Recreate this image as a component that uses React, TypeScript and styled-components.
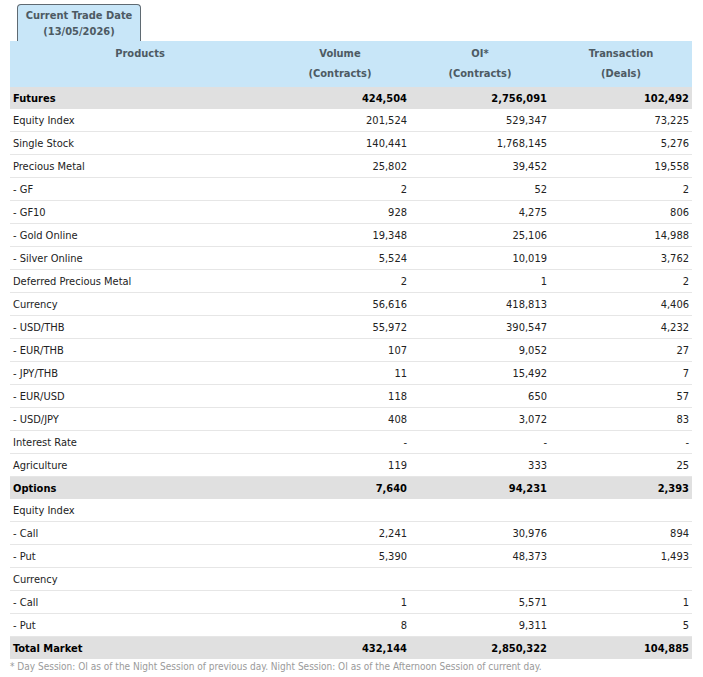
import React from "react";
import styled, { createGlobalStyle } from "styled-components";

const GlobalStyle = createGlobalStyle`
  body {
    margin: 0;
    background: #ffffff;
    font-family: "DejaVu Sans Condensed", "DejaVu Sans", sans-serif;
    font-size: 11px;
  }
`;

const StyledPage = styled.div`
  width: 682px;
  padding: 4px 11px 0 10px;
`;

const StyledTabBar = styled.div`
  display: flex;
  padding-left: 7px;
`;

const StyledTab = styled.div`
  width: 124px;
  height: 37px;
  box-sizing: border-box;
  border: 1px solid #5f6a72;
  border-bottom: none;
  border-radius: 4px 4px 0 0;
  background: #c8e6f8;
  color: #4d5a63;
  font-weight: bold;
  text-align: center;
  line-height: 16px;
  padding-top: 3px;
`;

const StyledTable = styled.table`
  width: 682px;
  border-collapse: collapse;
  table-layout: fixed;
`;

const StyledHeadCell = styled.th<{ $width: number }>`
  width: ${(p) => p.$width}px;
  background: #c8e6f8;
  color: #4d5a63;
  font-weight: bold;
  text-align: center;
  vertical-align: top;
  line-height: 20px;
  padding: 3px 0;
`;

const StyledRow = styled.tr<{ $group?: boolean }>`
  background: ${(p) => (p.$group ? "#e0e0e0" : "#ffffff")};
  color: ${(p) => (p.$group ? "#000000" : "#222222")};
  font-weight: ${(p) => (p.$group ? "bold" : "normal")};
  & > td {
    border-bottom: ${(p) => (p.$group ? "none" : "1px solid #e6e6e6")};
  }
`;

const StyledCell = styled.td<{ $num?: boolean }>`
  height: 22px;
  padding: 0 ${(p) => (p.$num ? "3px" : "0")} 0 ${(p) => (p.$num ? "0" : "3px")};
  text-align: ${(p) => (p.$num ? "right" : "left")};
  white-space: nowrap;
`;

const StyledNote = styled.div`
  color: #9a9a9a;
  font-size: 10px;
  line-height: 14px;
  padding-top: 1px;
`;

type Row = [string, string, string, string, boolean?];

const rows: Row[] = [
  ["Futures", "424,504", "2,756,091", "102,492", true],
  ["Equity Index", "201,524", "529,347", "73,225"],
  ["Single Stock", "140,441", "1,768,145", "5,276"],
  ["Precious Metal", "25,802", "39,452", "19,558"],
  ["- GF", "2", "52", "2"],
  ["- GF10", "928", "4,275", "806"],
  ["- Gold Online", "19,348", "25,106", "14,988"],
  ["- Silver Online", "5,524", "10,019", "3,762"],
  ["Deferred Precious Metal", "2", "1", "2"],
  ["Currency", "56,616", "418,813", "4,406"],
  ["- USD/THB", "55,972", "390,547", "4,232"],
  ["- EUR/THB", "107", "9,052", "27"],
  ["- JPY/THB", "11", "15,492", "7"],
  ["- EUR/USD", "118", "650", "57"],
  ["- USD/JPY", "408", "3,072", "83"],
  ["Interest Rate", "-", "-", "-"],
  ["Agriculture", "119", "333", "25"],
  ["Options", "7,640", "94,231", "2,393", true],
  ["Equity Index", "", "", ""],
  ["- Call", "2,241", "30,976", "894"],
  ["- Put", "5,390", "48,373", "1,493"],
  ["Currency", "", "", ""],
  ["- Call", "1", "5,571", "1"],
  ["- Put", "8", "9,311", "5"],
  ["Total Market", "432,144", "2,850,322", "104,885", true],
];

export default function App() {
  return (
    <StyledPage>
      <GlobalStyle />
      <StyledTabBar>
        <StyledTab>
          Current Trade Date
          <br />
          (13/05/2026)
        </StyledTab>
      </StyledTabBar>
      <StyledTable>
        <thead>
          <tr>
            <StyledHeadCell $width={260}>Products</StyledHeadCell>
            <StyledHeadCell $width={140}>
              Volume
              <br />
              (Contracts)
            </StyledHeadCell>
            <StyledHeadCell $width={140}>
              OI*
              <br />
              (Contracts)
            </StyledHeadCell>
            <StyledHeadCell $width={142}>
              Transaction
              <br />
              (Deals)
            </StyledHeadCell>
          </tr>
        </thead>
        <tbody>
          {rows.map(([name, vol, oi, deals, group], i) => (
            <StyledRow key={i} $group={group}>
              <StyledCell>{name}</StyledCell>
              <StyledCell $num>{vol}</StyledCell>
              <StyledCell $num>{oi}</StyledCell>
              <StyledCell $num>{deals}</StyledCell>
            </StyledRow>
          ))}
        </tbody>
      </StyledTable>
      <StyledNote>
        * Day Session: OI as of the Night Session of previous day. Night Session: OI as of the
        Afternoon Session of current day.
      </StyledNote>
    </StyledPage>
  );
}
